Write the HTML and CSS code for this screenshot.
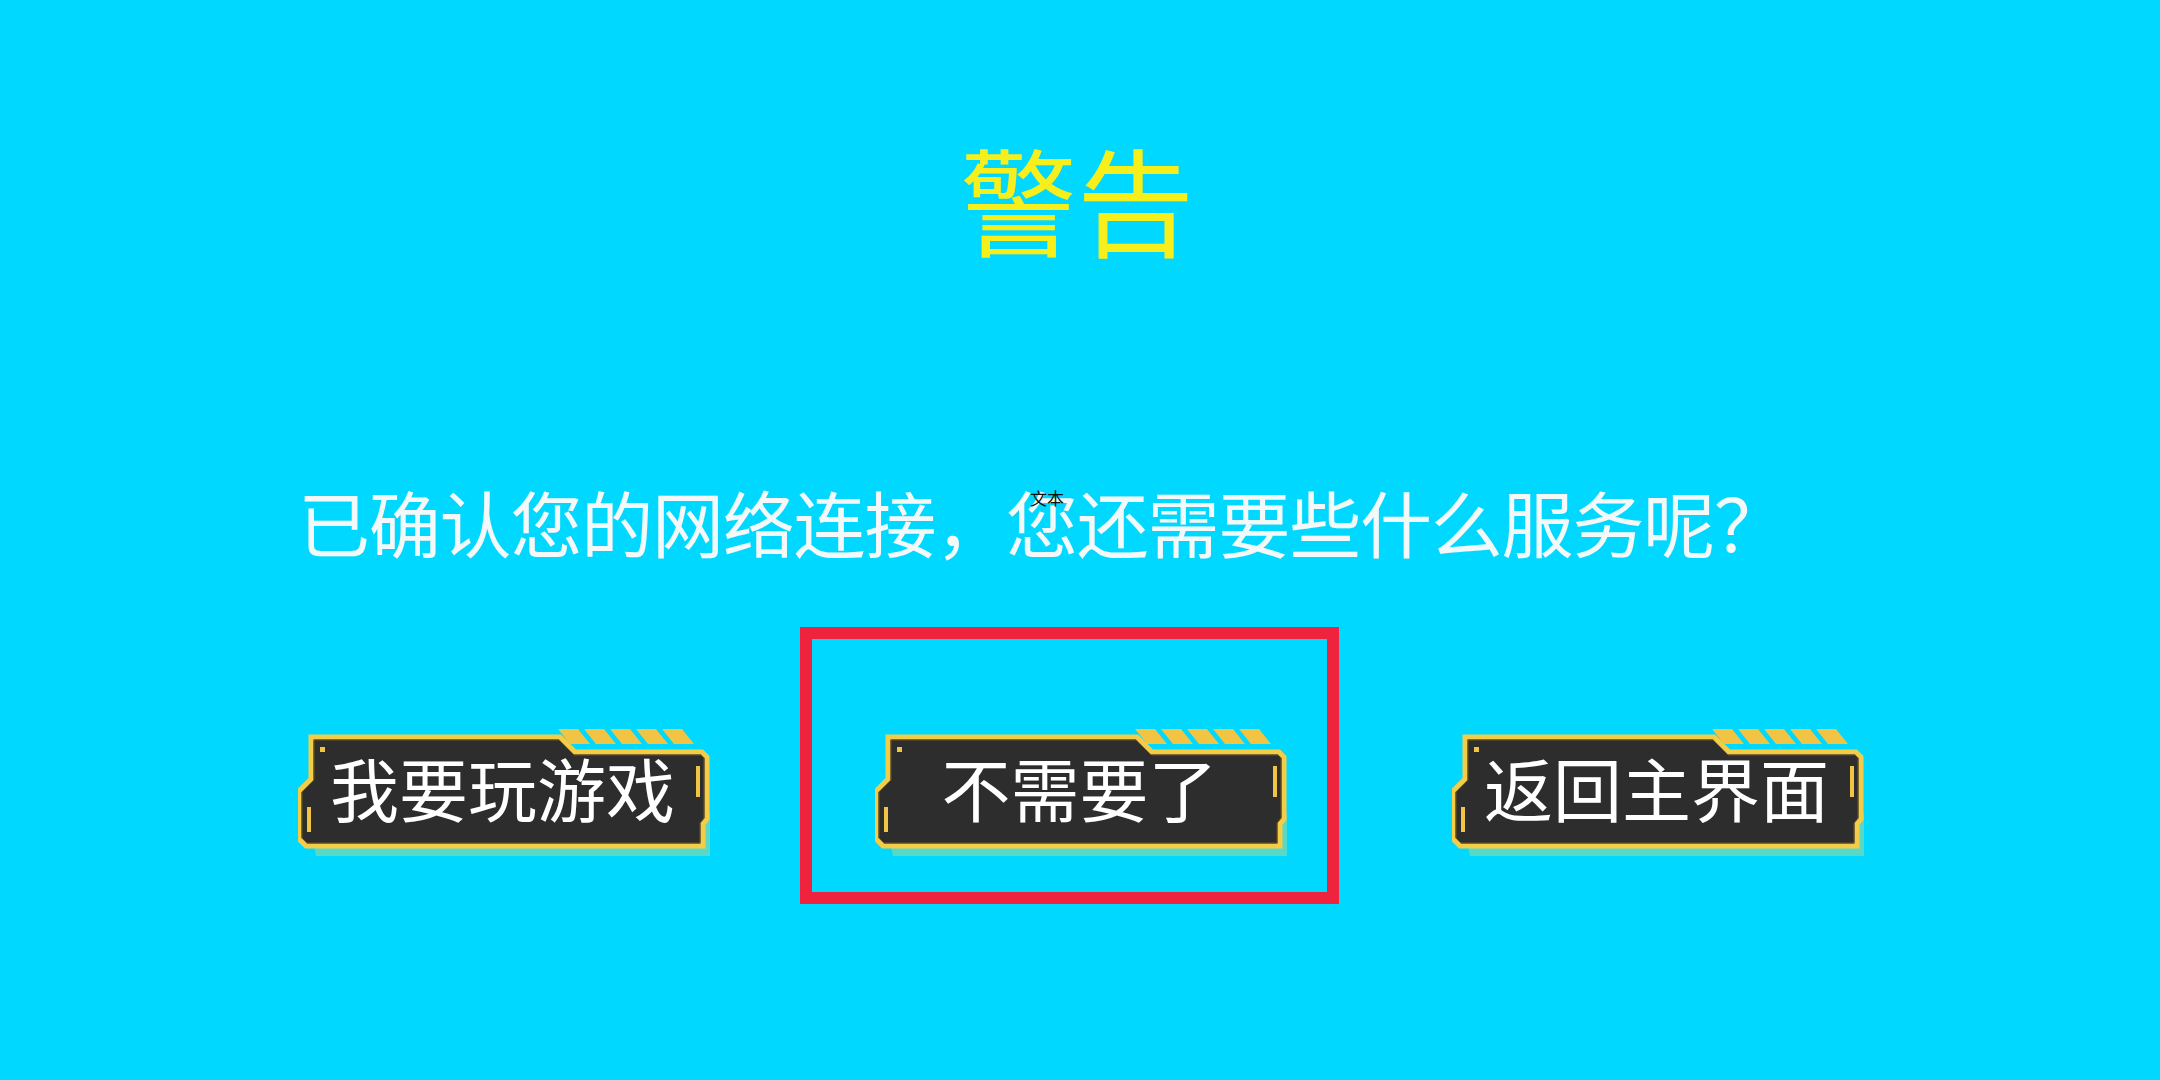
FILE: index.html
```html
<!DOCTYPE html>
<html lang="zh-CN">
<head>
<meta charset="utf-8">
<title>警告</title>
<link rel="stylesheet" href="styles.css">
</head>
<body>
<svg class="defs" width="0" height="0" aria-hidden="true">
  <defs>
    <symbol id="btn-shape" viewBox="0 0 412 130">
      <polygon class="shadow" points="14,110 404,110 404,86 412,86 412,129 18,129"/>
      <polygon class="stripe" points="260,2 280,2 292,17 272,17"/>
      <polygon class="stripe" points="286,2 306,2 318,17 298,17"/>
      <polygon class="stripe" points="312,2 332,2 344,17 324,17"/>
      <polygon class="stripe" points="338,2 358,2 370,17 350,17"/>
      <polygon class="stripe" points="364,2 384,2 396,17 376,17"/>
      <polygon class="body" points="13,10 262,10 277,25 404,25 409,30 409,92 405,97 405,119 8,119 1,112 1,64 13,52"/>
      <polygon class="inner" points="16,13 261,13 276,28 403,28 406,31 406,91 402,96 402,116 9,116 4,111 4,65 16,53"/>
      <rect class="mark" x="22" y="20" width="5" height="5"/>
      <rect class="mark" x="9" y="80" width="4" height="25"/>
      <rect class="mark" x="398" y="39" width="4" height="31"/>
    </symbol>
  </defs>
</svg>

<main class="screen">
  <h1 class="title">警告</h1>

  <div class="content">
    <p class="message">已确认您的网络连接，您还需要些什么服务呢？<span class="tag">文本</span></p>

    <div class="actions">
      <button class="btn" type="button">
        <svg class="btn-bg" viewBox="0 0 412 130"><use href="#btn-shape"/></svg>
        <span class="btn-label">我要玩游戏</span>
      </button>
      <button class="btn selected" type="button">
        <svg class="btn-bg" viewBox="0 0 412 130"><use href="#btn-shape"/></svg>
        <span class="btn-label">不需要了</span>
        <span class="focus-box"></span>
      </button>
      <button class="btn" type="button">
        <svg class="btn-bg" viewBox="0 0 412 130"><use href="#btn-shape"/></svg>
        <span class="btn-label">返回主界面</span>
      </button>
    </div>
  </div>
</main>
</body>
</html>
```

FILE: styles.css
```css
html, body {
  margin: 0;
  padding: 0;
}

body {
  width: 2160px;
  height: 1080px;
  background: #00d8ff;
  font-family: "Noto Sans CJK SC", "Noto Sans", sans-serif;
  overflow: hidden;
}

.defs {
  position: absolute;
  width: 0;
  height: 0;
}

.screen {
  display: flex;
  flex-direction: column;
}

.title {
  margin: 139px 0 0 0;
  padding-right: 6px;
  text-align: center;
  font-size: 117px;
  line-height: 1;
  font-weight: 400;
  color: #f6ef1c;
}

.content {
  display: flex;
  flex-direction: column;
  padding-left: 298px;
}

.message {
  position: relative;
  margin: 229px 0 0 0;
  font-size: 72px;
  line-height: 1;
  color: #f3f8f8;
  white-space: nowrap;
  letter-spacing: -1.2px;
}

.tag {
  position: absolute;
  left: 732px;
  top: 4px;
  font-size: 17px;
  line-height: 1;
  letter-spacing: 0;
  color: #111;
}

.actions {
  display: flex;
  gap: 165px;
  margin-top: 170px;
}

.btn {
  position: relative;
  display: grid;
  width: 412px;
  height: 130px;
  padding: 0;
  border: 0;
  background: none;
  font-family: inherit;
  cursor: pointer;
}

.btn-bg,
.btn-label {
  grid-area: 1 / 1;
}

.btn-bg {
  width: 412px;
  height: 130px;
  display: block;
}

.btn-label {
  display: flex;
  align-items: center;
  justify-content: center;
  padding: 6px 3px 15px 0;
  font-size: 69px;
  line-height: 1;
  color: #ffffff;
}

.shadow { fill: #58d8c6; }
.stripe { fill: #f2c443; }
.body { fill: #2d2d2d; stroke: #f3cd48; stroke-width: 5; stroke-linejoin: miter; }
.inner { fill: none; stroke: #6d5520; stroke-width: 1; }
.mark { fill: #f2c443; }

.focus-box {
  position: absolute;
  left: -75px;
  top: -100px;
  width: 539px;
  height: 277px;
  box-sizing: border-box;
  border: 12px solid #f0233f;
}
```
